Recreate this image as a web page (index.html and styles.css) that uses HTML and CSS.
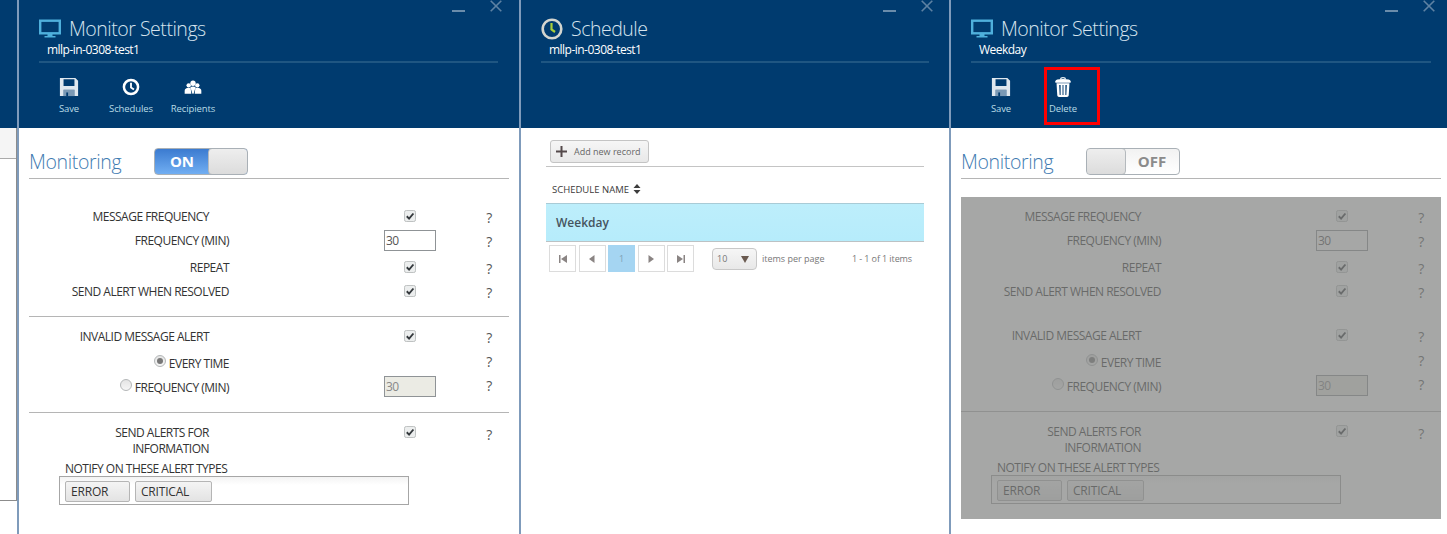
FILE: index.html
```html
<!doctype html>
<html lang="en">
<head>
    <meta charset="UTF-8">
    <title>Monitor Settings</title>
    <link rel="stylesheet" href="styles.css">
</head>
<body>
<svg class="defs" width="0" height="0">
    <symbol id="i-save" viewBox="-1 -1 22 22">
        <path fill-rule="evenodd" d="M0 0h17l3 3v17H0zM4 1.500v7.500h12V1.500zM4 13v7h12v-7z"/>
        <path opacity=".55" d="M4 13h12v7H4z"/>
        <path fill="#003b6f" d="M7 16h2v4H7z"/>
    </symbol>
    <symbol id="i-clock" viewBox="-2 -2 24 24">
        <circle cx="10" cy="10" r="8.500" fill="none" stroke="currentColor" stroke-width="3"/>
        <path d="M10 5v5.500l3.500 2.500" fill="none" stroke="currentColor" stroke-width="2.200"/>
    </symbol>
    <symbol id="i-people" viewBox="-2 -4 24 24">
        <circle cx="10" cy="3.500" r="3.200"/>
        <circle cx="4.800" cy="6" r="2.600"/>
        <circle cx="15.200" cy="6" r="2.600"/>
        <path d="M0 16v-3.500q0-3 4.800-3.500 1.500 0 2.400.6L8 16zM20 16v-3.500q0-3-4.800-3.500-1.500 0-2.400.6L12 16zM9.300 16L6.800 8q3.200-1.500 6.400 0L10.700 16z"/>
    </symbol>
    <symbol id="i-trash" viewBox="0 0 16 21">
        <path fill="none" stroke="currentColor" stroke-width="1.300" d="M5.500 2.500Q5.500 .7 8 .7t2.500 1.800"/>
        <path d="M0 4.500Q0 2 8 2t8 2.500V6H0z"/>
        <path fill-rule="evenodd" d="M1.200 6.500h13.600L14 19.500q-.2 1.500-1.800 1.500H3.800q-1.600 0-1.800-1.500zM4 8.500l.5 10.500h1V8.500zM7.500 8.500V19h1V8.500zM10.500 8.500V19h1l.5-10.500z"/>
    </symbol>
    <symbol id="i-check" viewBox="0 0 13 13">
        <rect x=".5" y=".5" width="12" height="12" rx="2" fill="#eceeee" stroke="#b9bcbc"/>
        <path d="M3 6.800l2.500 2.500L10.200 3.800" fill="none" stroke="#33383c" stroke-width="2"/>
    </symbol>
    <symbol id="i-close" viewBox="0 0 12 12">
        <path d="M.7 .7l10.600 10.600M11.300 .7L.7 11.300" fill="none" stroke="currentColor" stroke-width="1.600"/>
    </symbol>
</svg>

<div class="page">
    <div class="sliver">
        <div class="sliver-head"></div>
        <div class="sliver-table">
            <div class="sliver-th"></div>
        </div>
    </div>

    <section class="panel panel-a">
        <header class="head">
            <div class="win"><span class="win-min"></span><svg class="win-close"><use href="#i-close"/></svg></div>
            <div class="title">
                <svg class="title-icon" viewBox="0 0 22 19">
                    <rect x="1.200" y="1.200" width="19.600" height="12.600" fill="none" stroke="#4fb0dc" stroke-width="2.400"/>
                    <path fill="#4fb0dc" d="M8.500 14h5v2.500h3V18h-11v-1.500h3z"/>
                </svg>
                <h1>Monitor Settings</h1>
            </div>
            <div class="sub">mllp-in-0308-test1</div>
            <div class="tools">
                <div class="tool"><svg class="tool-icon"><use href="#i-save"/></svg><span>Save</span></div>
                <div class="tool"><svg class="tool-icon"><use href="#i-clock"/></svg><span>Schedules</span></div>
                <div class="tool"><svg class="tool-icon"><use href="#i-people"/></svg><span>Recipients</span></div>
            </div>
        </header>
        <div class="body">
            <div class="mon">
                <h2>Monitoring</h2>
                <div class="toggle toggle-on"><span class="toggle-text">ON</span><span class="knob"></span></div>
            </div>
            <div class="form">
                <div class="group">
                    <div class="row"><span class="lbl lbl-short">MESSAGE FREQUENCY</span><span class="ctl"><svg class="check"><use href="#i-check"/></svg></span><span class="help">?</span></div>
                    <div class="row"><span class="lbl">FREQUENCY (MIN)</span><span class="ctl"><span class="num">30</span></span><span class="help">?</span></div>
                    <div class="row row-gap"><span class="lbl">REPEAT</span><span class="ctl"><svg class="check"><use href="#i-check"/></svg></span><span class="help">?</span></div>
                    <div class="row"><span class="lbl">SEND ALERT WHEN RESOLVED</span><span class="ctl"><svg class="check"><use href="#i-check"/></svg></span><span class="help">?</span></div>
                </div>
                <div class="group group-mid">
                    <div class="row"><span class="lbl lbl-short">INVALID MESSAGE ALERT</span><span class="ctl"><svg class="check"><use href="#i-check"/></svg></span><span class="help">?</span></div>
                    <div class="row row-radio row-gap2"><span class="lbl"><i class="radio radio-on"></i>EVERY TIME</span><span class="ctl"></span><span class="help">?</span></div>
                    <div class="row row-radio"><span class="lbl"><i class="radio"></i>FREQUENCY (MIN)</span><span class="ctl"><span class="num num-off">30</span></span><span class="help">?</span></div>
                </div>
                <div class="group group-last">
                    <div class="row row-tall"><span class="lbl lbl-short">SEND ALERTS FOR<br>INFORMATION</span><span class="ctl"><svg class="check"><use href="#i-check"/></svg></span><span class="help">?</span></div>
                    <div class="notify">NOTIFY ON THESE ALERT TYPES</div>
                    <div class="chips"><span class="chip chip-a">ERROR</span><span class="chip chip-b">CRITICAL</span></div>
                </div>
            </div>
        </div>
    </section>

    <section class="panel panel-b">
        <header class="head">
            <div class="win"><span class="win-min"></span><svg class="win-close"><use href="#i-close"/></svg></div>
            <div class="title">
                <svg class="title-icon" viewBox="0 0 22 22">
                    <circle cx="11" cy="11" r="9.300" fill="none" stroke="#d3d5cf" stroke-width="2.600"/>
                    <path d="M10.500 5v6.500l3.500 2.500" fill="none" stroke="#a9cf3a" stroke-width="2.200"/>
                </svg>
                <h1>Schedule</h1>
            </div>
            <div class="sub">mllp-in-0308-test1</div>
        </header>
        <div class="sched">
            <div class="sched-bar">
                <div class="add">
                    <svg class="add-icon" viewBox="0 0 11 11"><path d="M5.500 0v11M0 5.500h11" stroke="#54494a" stroke-width="2"/></svg>
                    Add new record
                </div>
            </div>
            <div class="th">SCHEDULE NAME <svg class="sort" viewBox="0 0 8 10"><path fill="#3c3c3c" d="M4 0l3.500 4h-7zM4 10L.5 6h7z"/></svg></div>
            <div class="tr">Weekday</div>
            <div class="pager">
                <span class="pg"><svg class="pg-icon" viewBox="0 0 8 8"><path d="M0 0h1.500v8H0zM8 0v8L2 4z"/></svg></span>
                <span class="pg"><svg class="pg-icon" viewBox="0 0 8 8"><path d="M6.500 0v8L1 4z"/></svg></span>
                <span class="pg pg-on">1</span>
                <span class="pg"><svg class="pg-icon" viewBox="0 0 8 8"><path d="M1.500 0v8L7 4z"/></svg></span>
                <span class="pg"><svg class="pg-icon" viewBox="0 0 8 8"><path d="M0 0v8l6-4zM6.500 0H8v8H6.500z"/></svg></span>
                <span class="size">10<i class="size-arrow"></i></span>
                <span class="per">items per page</span>
                <span class="count">1 - 1 of 1 items</span>
            </div>
        </div>
    </section>

    <section class="panel panel-c">
        <header class="head">
            <div class="win"><span class="win-min"></span><svg class="win-close"><use href="#i-close"/></svg></div>
            <div class="title">
                <svg class="title-icon" viewBox="0 0 22 19">
                    <rect x="1.200" y="1.200" width="19.600" height="12.600" fill="none" stroke="#4fb0dc" stroke-width="2.400"/>
                    <path fill="#4fb0dc" d="M8.500 14h5v2.500h3V18h-11v-1.500h3z"/>
                </svg>
                <h1>Monitor Settings</h1>
            </div>
            <div class="sub">Weekday</div>
            <div class="tools">
                <div class="tool"><svg class="tool-icon"><use href="#i-save"/></svg><span>Save</span></div>
                <div class="tool"><svg class="tool-icon tool-trash"><use href="#i-trash"/></svg><span>Delete</span><b class="mark"></b></div>
            </div>
        </header>
        <div class="body">
            <div class="mon">
                <h2>Monitoring</h2>
                <div class="toggle toggle-off"><span class="knob"></span><span class="toggle-text">OFF</span></div>
            </div>
            <div class="form">
                <div class="group group-plain">
                    <div class="row"><span class="lbl lbl-short">MESSAGE FREQUENCY</span><span class="ctl"><svg class="check"><use href="#i-check"/></svg></span><span class="help">?</span></div>
                    <div class="row"><span class="lbl">FREQUENCY (MIN)</span><span class="ctl"><span class="num">30</span></span><span class="help">?</span></div>
                    <div class="row row-gap"><span class="lbl">REPEAT</span><span class="ctl"><svg class="check"><use href="#i-check"/></svg></span><span class="help">?</span></div>
                    <div class="row"><span class="lbl">SEND ALERT WHEN RESOLVED</span><span class="ctl"><svg class="check"><use href="#i-check"/></svg></span><span class="help">?</span></div>
                </div>
                <div class="group group-mid">
                    <div class="row"><span class="lbl lbl-short">INVALID MESSAGE ALERT</span><span class="ctl"><svg class="check"><use href="#i-check"/></svg></span><span class="help">?</span></div>
                    <div class="row row-radio row-gap2"><span class="lbl"><i class="radio radio-on"></i>EVERY TIME</span><span class="ctl"></span><span class="help">?</span></div>
                    <div class="row row-radio"><span class="lbl"><i class="radio"></i>FREQUENCY (MIN)</span><span class="ctl"><span class="num num-off">30</span></span><span class="help">?</span></div>
                </div>
                <div class="group group-last">
                    <div class="row row-tall"><span class="lbl lbl-short">SEND ALERTS FOR<br>INFORMATION</span><span class="ctl"><svg class="check"><use href="#i-check"/></svg></span><span class="help">?</span></div>
                    <div class="notify">NOTIFY ON THESE ALERT TYPES</div>
                    <div class="chips"><span class="chip chip-a">ERROR</span><span class="chip chip-b">CRITICAL</span></div>
                </div>
                <div class="overlay"></div>
            </div>
        </div>
    </section>
</div>
</body>
</html>
```

FILE: styles.css
```css
*{
    margin: 0;
    padding: 0;
    box-sizing: border-box;
}
html,body{
    height: 534px;
    overflow: hidden;
    background: #fff;
}
body{
    font-family: "Open Sans", "Liberation Sans", sans-serif;
    color: #333;
}
.defs{
    position: absolute;
}
.page{
    display: flex;
    width: 1500px;
    height: 534px;
}

/* sliver of the page behind the panels */
.sliver{
    width: 17px;
    flex: none;
}
.sliver-head{
    height: 128px;
    background: #003b6f;
}
.sliver-table{
    height: 373px;
    border-right: 1px solid #8c8c8c;
    border-bottom: 1px solid #8c8c8c;
}
.sliver-th{
    height: 31px;
    background: #f5f5f5;
    border-bottom: 1px solid #aaa;
}

.panel{
    flex: none;
    border-left: 2px solid #7f9bbb;
}
.panel-a{
    width: 502px;
}
.panel-b{
    width: 430px;
}
.panel-c{
    width: 500px;
}

/* header */
.head{
    height: 128px;
    background: #003b6f;
    padding-left: 20px;
}
.panel-a .head{
    padding-right: 21px;
}
.panel-b .head{
    padding-right: 20px;
}
.panel-c .head{
    padding-right: 18px;
}
.win{
    display: flex;
    justify-content: flex-end;
    align-items: flex-start;
    height: 16px;
    margin-right: -4px;
    color: #5e82a3;
}
.win-min{
    width: 13px;
    height: 2px;
    margin: 10px 25px 0 0;
    background: #6a8cab;
}
.win-close{
    width: 12px;
    height: 12px;
}
.title{
    display: flex;
    align-items: center;
    height: 26px;
    color: #d5e3ee;
}
.title-icon{
    width: 22px;
    height: 22px;
    margin-right: 8px;
}
h1{
    font-size: 19.500px;
    font-weight: 300;
    letter-spacing: -.48px;
    line-height: 26px;
}
.sub{
    height: 21px;
    padding: 0 0 4px 8px;
    border-bottom: 2px solid #1f5682;
    font-size: 12px;
    line-height: 16px;
    letter-spacing: -.52px;
    color: #fff;
}
.tools{
    display: flex;
    margin: 14px 0 0 -1px;
}
.tool{
    position: relative;
    display: flex;
    flex-direction: column;
    align-items: center;
    width: 62px;
    font-size: 9.500px;
    letter-spacing: -.1px;
    color: #b8dbe6;
}
.tool-icon{
    width: 20px;
    height: 20px;
    margin-bottom: 5px;
    color: #fff;
    fill: #dfe7ee;
}
.tool:nth-child(2) .tool-icon,.tool:nth-child(3) .tool-icon{
    fill: #fff;
}
.tool-trash{
    color: #e6eef3;
    fill: #e6eef3;
}
.mark{
    position: absolute;
    left: 12px;
    top: -10px;
    width: 56px;
    height: 58px;
    border: 3px solid #f00;
}

/* monitoring block */
.body{
    padding: 0 0 0 10px;
}
.mon{
    display: flex;
    align-items: center;
    width: 480px;
    height: 51px;
    padding-top: 17px;
    border-bottom: 1px solid #b5b5b5;
}
h2{
    width: 125px;
    font-size: 19.500px;
    font-weight: 300;
    letter-spacing: -.35px;
    color: #3f7bb1;
}
.toggle{
    display: flex;
    width: 94px;
    height: 27px;
    border: 1px solid #a9b0b6;
    border-radius: 4px;
    overflow: hidden;
    font-size: 15px;
    font-weight: 700;
    line-height: 25px;
    text-align: center;
}
.toggle-on{
    background: linear-gradient(#3b7bd0, #71aef2);
    color: #fff;
}
.toggle-off{
    background: linear-gradient(#f2f2f2, #fff);
    color: #8b8b8b;
}
.toggle-text{
    flex: 1;
}
.knob{
    width: 40px;
    background: linear-gradient(#eee, #dcdcdc);
    border: 1px solid #b4b9bd;
    border-radius: 4px;
    margin: -1px;
}

/* form */
.form{
    position: relative;
    width: 480px;
    height: 322px;
    margin-top: 18px;
    padding-top: 7px;
    font-size: 12px;
    letter-spacing: -.5px;
}
.group{
    border-bottom: 1px solid #b5b5b5;
    padding-bottom: 13px;
    padding-top: 7px;
}
.group:first-child{
    padding-top: 0;
}
.group-mid{
    padding-bottom: 14px;
}
.group-plain{
    border-bottom: 0;
}
.group-last{
    border-bottom: 0;
    padding-top: 10px;
}
.row{
    display: grid;
    grid-template-columns: 355px 52px 106px;
    align-items: center;
    height: 24px;
    line-height: 16px;
}
.row-gap{
    margin-top: 3px;
}
.row-gap2{
    margin-top: 2px;
}
.row-tall{
    height: 32px;
    align-items: start;
}
.lbl{
    padding: 2px 155px 0 0;
    text-align: right;
}
.lbl-short{
    padding-right: 175px;
}
.row-radio .lbl{
    padding-top: 4px;
}
.ctl{
    display: flex;
    justify-content: center;
    align-items: center;
    height: 100%;
}
.row-tall .ctl{
    height: 18px;
}
.help{
    padding-top: 4px;
    font-size: 14px;
    text-align: center;
    color: #555;
}
.row-radio .help{
    padding-top: 0;
}
.check{
    width: 12px;
    height: 12px;
}
.num{
    width: 52px;
    height: 21px;
    border: 1px solid #8f9396;
    font-size: 12px;
    line-height: 20px;
    padding-left: 1px;
    background: #fff;
    color: #555;
}
.num-off{
    background: #ebebe4;
    color: #888;
}
.radio{
    display: inline-block;
    width: 12px;
    height: 12px;
    margin-right: 3px;
    border: 1px solid #b4b7b8;
    border-radius: 50%;
    background: linear-gradient(#e4e4e4, #f6f6f6);
    position: relative;
    top: -4px;
    vertical-align: middle;
}
.radio-on::after{
    content: "";
    display: block;
    width: 6px;
    height: 6px;
    margin: 2px;
    border-radius: 50%;
    background: #777;
}
.notify{
    margin: 6px 0 0 36px;
    line-height: 15px;
}
.chips{
    display: flex;
    gap: 5px;
    width: 350px;
    height: 29px;
    margin-left: 30px;
    padding: 4px 5px;
    border: 1px solid #a6a6a6;
    background: linear-gradient(#f3f3f3, #fff 30%);
}
.chip{
    height: 21px;
    padding-left: 5px;
    border: 1px solid #b5b5b5;
    border-radius: 2px;
    background: linear-gradient(#f4f4f4, #e3e3e3);
    line-height: 20px;
    letter-spacing: -.2px;
}
.chip-a{
    width: 65px;
}
.chip-b{
    width: 77px;
}
.overlay{
    position: absolute;
    inset: 0;
    background: rgba(128,130,128,.7);
}

/* schedule grid */
.sched{
    padding: 12px 25px 0 25px;
}
.sched-bar{
    height: 27px;
    padding-left: 4px;
    border-bottom: 1px solid #c4c4c4;
}
.add{
    display: flex;
    align-items: center;
    width: 99px;
    height: 23px;
    padding-left: 5px;
    border: 1px solid #c4c4c4;
    border-radius: 3px;
    background: linear-gradient(#f6f6f6, #e8e8e8);
    font-size: 9px;
    color: #666;
}
.add-icon{
    width: 11px;
    height: 11px;
    margin-right: 7px;
}
.th{
    display: flex;
    align-items: center;
    height: 36px;
    padding: 8px 0 0 6px;
    font-size: 9.500px;
    font-weight: 500;
    color: #3a3a3a;
}
.sort{
    width: 8px;
    height: 10px;
    margin-left: 4px;
}
.tr{
    height: 39px;
    padding-left: 10px;
    background: linear-gradient(#bdeefb, #b6ecfb);
    border-top: 1px solid #a9cbd6;
    border-bottom: 1px solid #bcc2c4;
    font-size: 12px;
    font-weight: 600;
    line-height: 37px;
    color: #46545e;
}
.pager{
    display: flex;
    align-items: center;
    height: 27px;
    margin-top: 3px;
    padding-left: 3px;
    font-size: 9px;
    color: #777;
}
.pg{
    display: flex;
    justify-content: center;
    align-items: center;
    width: 27px;
    height: 27px;
    margin-right: 2.500px;
    border: 1px solid #dcdcdc;
    fill: #8a8483;
}
.pg-on{
    border-color: #a5d5f2;
    background: #a5d5f2;
    color: #7e9fb4;
}
.pg-icon{
    width: 8px;
    height: 8px;
}
.size{
    position: relative;
    display: flex;
    align-items: center;
    width: 45px;
    height: 22px;
    margin: 0 5px 0 15.500px;
    padding-left: 4px;
    border: 1px solid #c8c8c8;
    border-radius: 4px;
    background: linear-gradient(#f6f6f6, #e8e8e8);
}
.size-arrow{
    position: absolute;
    right: 7px;
    top: 7px;
    border: 4px solid transparent;
    border-top: 7px solid #6a5a50;
    border-bottom: 0;
}
.per{
    width: 90px;
}
.count{
    white-space: nowrap;
    letter-spacing: -.1px;
}
```
